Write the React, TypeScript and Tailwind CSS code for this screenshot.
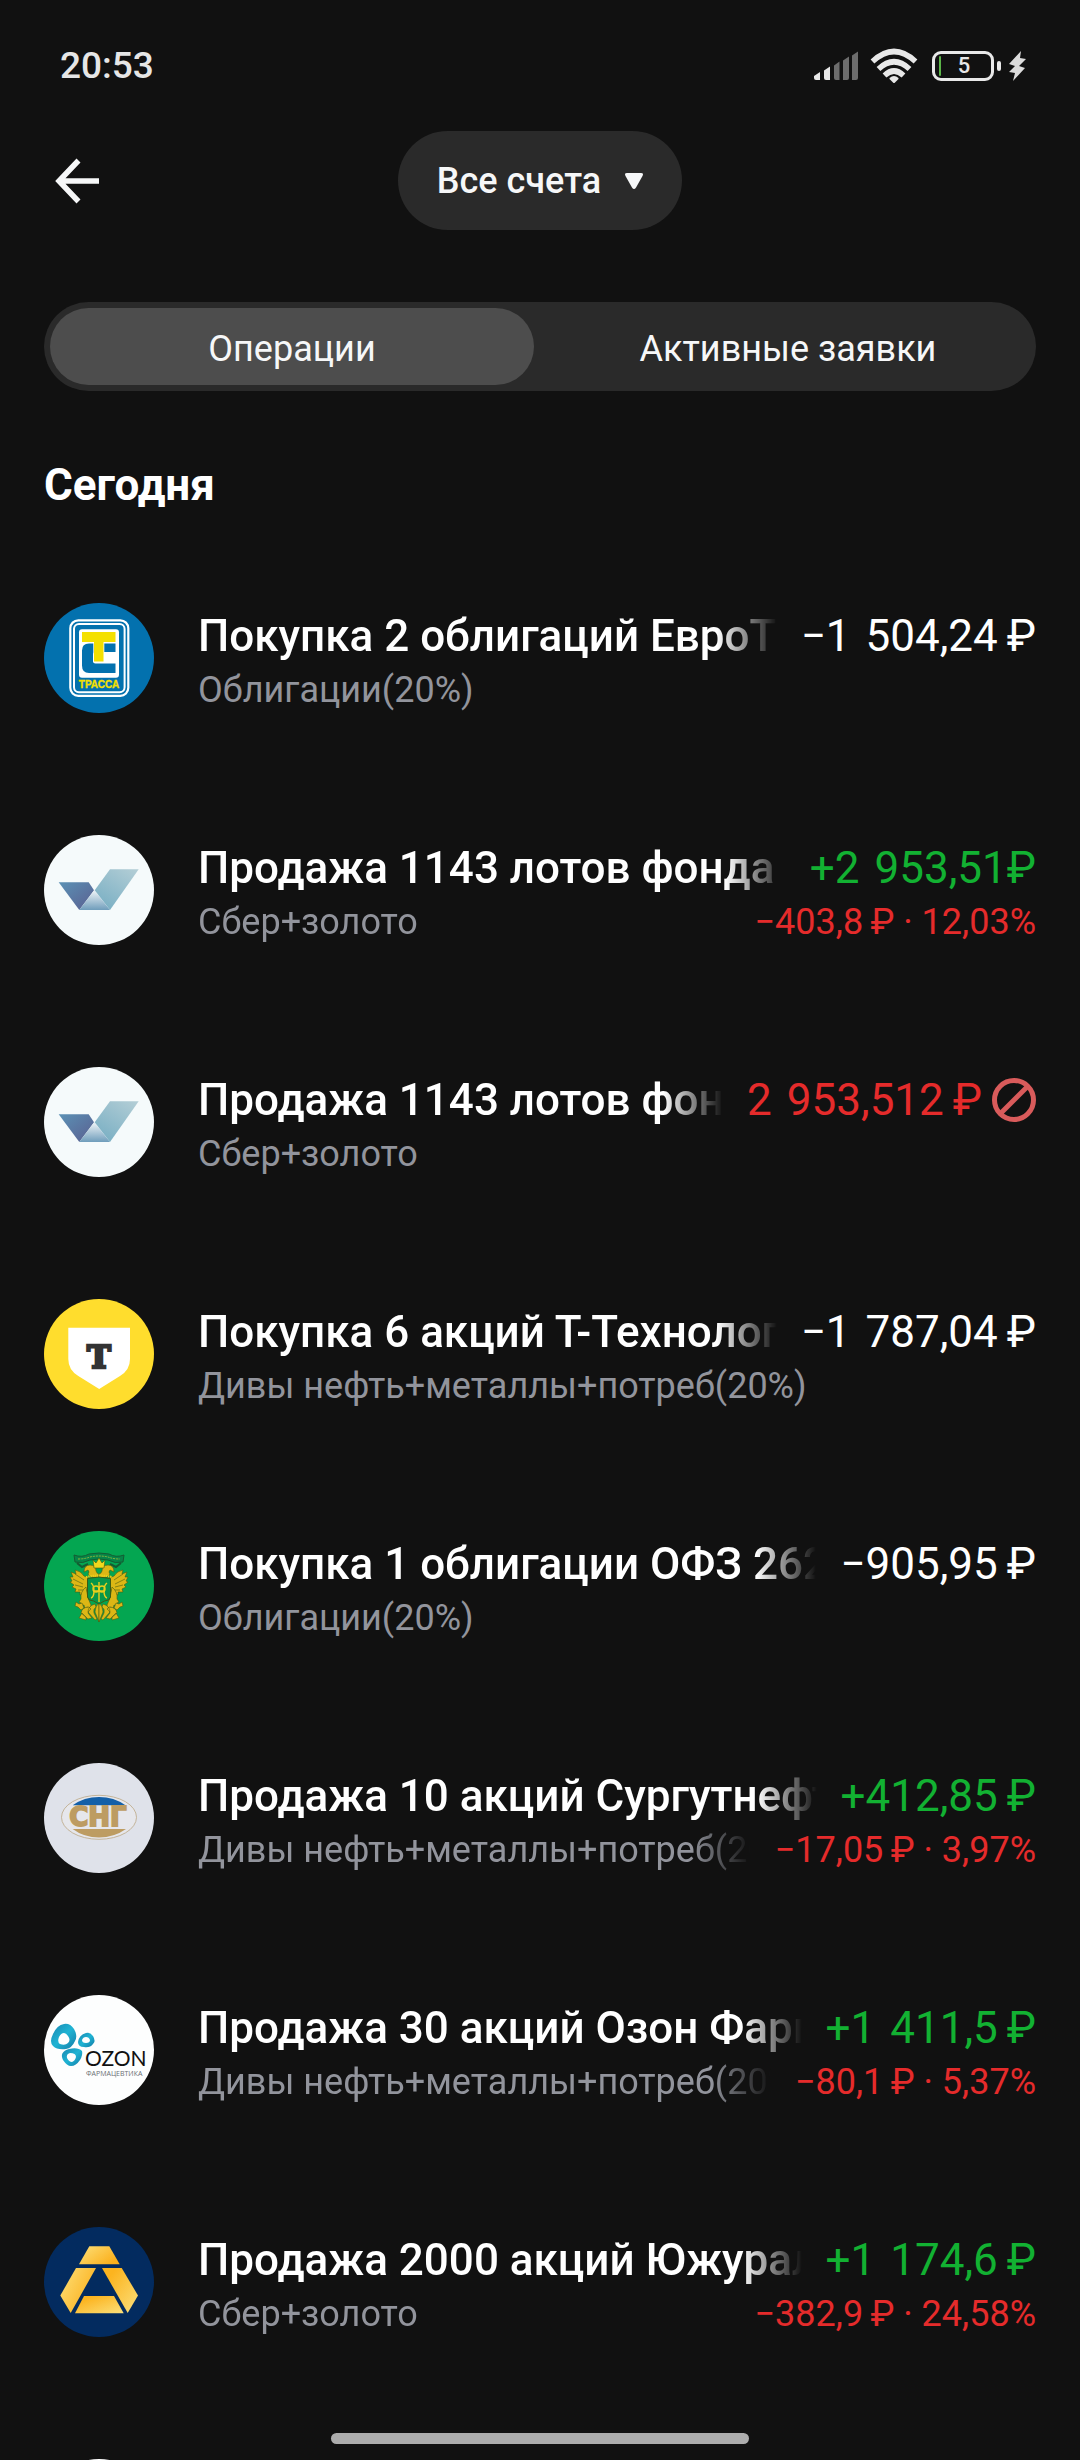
import type { ReactNode } from "react";

type Tone = "plain" | "gain" | "loss";

interface Operation {
  logo: ReactNode;
  title: string;
  account: string;
  amount: string;
  tone: Tone;
  result?: string;
  rejected?: boolean;
}

function Logo({ bg, label, children }: { bg: string; label: string; children?: ReactNode }) {
  return (
    <svg viewBox="0 0 110 110" role="img" aria-label={label} className="size-[110px] shrink-0">
      <circle cx="55" cy="55" r="55" fill={bg} />
      {children}
    </svg>
  );
}

function TrassaLogo() {
  return (
    <Logo bg="#0371ae" label="Трасса">
      <rect x="26.3" y="17.3" width="58" height="75.5" rx="8" fill="none" stroke="#fff" strokeWidth="2.2" />
      <rect x="30" y="21" width="50.6" height="68.2" rx="5" fill="none" stroke="#fff" strokeWidth="2" />
      <rect x="35" y="26.3" width="40" height="48.5" rx="3" fill="#fff" />
      <path d="M71.5 40.500H45q-7 0-7 7v15q0 7.500 7 7.500h26.500V60.500H51.500q-2.500 0-2.500-2.500v-6q0-3 2.500-3h20z" fill="#0371ae" />
      <path d="M49.300 39h11v20h-11z" fill="#fff" />
      <rect x="38" y="29" width="33.500" height="10" fill="#f4e000" />
      <rect x="50" y="29" width="9.500" height="29.500" fill="#f4e000" />
      <text x="55" y="85" textAnchor="middle" fontFamily="Liberation Sans, sans-serif" fontWeight="700" fontSize="10" fill="#f4e000" stroke="#f4e000" strokeWidth="0.300">
        ТРАССА
      </text>
    </Logo>
  );
}

function FundLogo({ id }: { id: string }) {
  return (
    <Logo bg="#f5fafb" label="Фонд">
      <defs>
        <linearGradient id={id + "a"} x1="0" y1="0" x2="1" y2="1">
          <stop offset="0" stopColor="#5b91b5" />
          <stop offset="1" stopColor="#5a5f90" />
        </linearGradient>
        <linearGradient id={id + "b"} x1="0" y1="0" x2="0" y2="1">
          <stop offset="0.1" stopColor="#e3ecf2" />
          <stop offset="1" stopColor="#6f9dbb" />
        </linearGradient>
        <linearGradient id={id + "c"} x1="1" y1="0" x2="0.3" y2="1">
          <stop offset="0" stopColor="#b4ced6" />
          <stop offset="1" stopColor="#7bb0c4" />
        </linearGradient>
      </defs>
      <path d="M14.700 47.300H44.700L50 55.300 35.300 75z" fill={"url(#" + id + "a)"} />
      <path d="M50.300 55.300 35.300 75H66z" fill={"url(#" + id + "b)"} />
      <path d="M66 34.300H94.700L66 75 50.700 55.300z" fill={"url(#" + id + "c)"} />
    </Logo>
  );
}

function TechLogo() {
  return (
    <Logo bg="#ffdd2d" label="Т-Технологии">
      <path d="M24.300 28.700H86V60q0 11-10 17L55.200 90 34.300 77q-10-6-10-17z" fill="#fff" />
      <text x="55" y="69" textAnchor="middle" fontFamily="DejaVu Serif, serif" fontWeight="700" fontSize="32" fill="#333" stroke="#333" strokeWidth="2.500">
        Т
      </text>
    </Logo>
  );
}

function EagleHalf() {
  return (
    <g stroke="#4a5c12" strokeWidth="0.6" fill="#dcb715" strokeLinejoin="round">
      <path d="M45 47 40 45Q37 40 31 39L32 43 27 41 29 46 26 46 28 50 26 51 30 54 28 56 32 58 31 61 36 61 36 64 41 62 44 57z" />
      <path d="M31 43l9 6M29 48l10 5M31 54l8 2M34 59l6 0" fill="none" />
      <path d="M54 47q-8 0-10-4 2-2 0-4l-4 2q0-7 6-7 6 0 6 6 1 3 3 3z" />
      <path d="M42 56q-6 5-5 12l-2 3 2 1-1 3 4-1 1 4 3-2 2 3 1-5-3-7z" />
      <path d="M38 72l-3 1-3-2-1 4 3 1 3 3 3-2z" />
      <path d="M55 72q-4 3-4 9l4 10z" />
      <path d="M51 73q-7 2-7 8l7 8 2-1-3-6q-1-4 2-6zM45 76q-7 0-8 6l7 6 4-1-4-5q0-2 3-4zM38 82l-3 5 7 2 0-3z" />
    </g>
  );
}

function TreasuryLogo() {
  return (
    <Logo bg="#04a651" label="ОФЗ">
      <path d="M30 24q8 3 15-1 10-2 20 0 7 4 15 1l-1 7q-8 2-15-2-9-2-18 0-7 4-15 2z" fill="#078447" stroke="#145c32" strokeWidth="1" />
      <path d="M34 28q7 0 12-2 9-2 18 0 5 2 12 2" stroke="#8fb93b" strokeWidth="1" strokeDasharray="2 1" fill="none" />
      <path d="M33 32l5 4 6-3M77 32l-5 4-6-3" stroke="#145c32" strokeWidth="2" fill="none" />
      <EagleHalf />
      <g transform="translate(110 0) scale(-1 1)">
        <EagleHalf />
      </g>
      <path d="M49 29l3 3 3-5 3 5 3-3-1 8H50z" fill="#f0d81d" stroke="#4a5c12" strokeWidth="0.6" />
      <path d="M43.500 47.500q11-3 23 0V66q-1 4-6 4l-5.500 3-5.500-3q-5 0-6-4z" fill="#07964a" stroke="#3d5a14" strokeWidth="1" />
      <path d="M42 46q13-3 26 0" stroke="#e9cf1d" strokeWidth="2" fill="none" strokeDasharray="1.500 0.700" />
      <g fill="none" stroke="#e9cf1d" strokeWidth="1.400">
        <path d="M47 52q3 2 3 8t-3 7M63 52q-3 2-3 8t3 7M55 51v20M49 60h12" />
        <circle cx="52" cy="58" r="3" />
        <circle cx="58" cy="58" r="3" />
      </g>
    </Logo>
  );
}

function SurgutLogo() {
  return (
    <Logo bg="#dfe2ea" label="Сургутнефтегаз">
      <ellipse cx="55" cy="54.300" rx="37.500" ry="22" fill="#e6e7ec" stroke="#bfae90" strokeWidth="0.900" />
      <path d="M28.700 42.300Q40 34 55 34t26.500 8.300z" fill="#1460a8" />
      <path d="M28.700 66Q40 74.500 55 74.500T82 66z" fill="#bd9c62" />
      <text x="54" y="63" textAnchor="middle" fontFamily="DejaVu Sans, sans-serif" fontWeight="700" fontSize="26" fill="#bd9c62" stroke="#bd9c62" strokeWidth="1.800">
        СНГ
      </text>
    </Logo>
  );
}

function OzonLogo() {
  return (
    <Logo bg="#fdfefe" label="Озон Фармацевтика">
      <defs>
        <linearGradient id="ozon-drop" x1="0" y1="0" x2="1" y2="1">
          <stop offset="0" stopColor="#1a86b0" />
          <stop offset="0.500" stopColor="#1fb4d4" />
          <stop offset="1" stopColor="#147ba6" />
        </linearGradient>
      </defs>
      <g fill="url(#ozon-drop)" fillRule="evenodd">
        <path d="M20 29q6-1 10 5 4 7 1 12-3 7-9 8-9 1-13-3-4-4 0-12 4-9 11-10zM20 38q-3 0-5 4-2 5 1 7 5 2 8-1 3-3 0-7-2-3-4-3z" />
        <path d="M42 38q4-1 7 3 3 5 0 8-3 4-9 3-6 0-6-5 1-7 8-9zM42 42q-3 0-4 3 0 3 4 3 4 0 4-3-1-3-4-3z" />
        <path d="M25 54q9-2 13 2 1 4-2 9-4 6-9 6-4 0-8-6-4-8 6-11zM26 58q-4 1-3 5 2 4 5 4 3-1 4-5 0-4-6-4z" />
      </g>
      <text x="41" y="71" fontFamily="Lato, sans-serif" fontSize="21" fill="#111">
        OZON
      </text>
      <text x="42" y="81" fontFamily="Open Sans, sans-serif" fontSize="7" fill="#6b7075">
        ФАРМАЦЕВТИКА
      </text>
    </Logo>
  );
}

function GoldLogo() {
  return (
    <Logo bg="#032b5f" label="Южуралзолото">
      <defs>
        <linearGradient id="gold-a" x1="0" y1="0" x2="1" y2="0.600">
          <stop offset="0" stopColor="#fde07a" />
          <stop offset="1" stopColor="#fbb01c" />
        </linearGradient>
        <linearGradient id="gold-b" x1="0" y1="0" x2="1" y2="1">
          <stop offset="0.200" stopColor="#fcb41f" />
          <stop offset="1" stopColor="#fbe07c" />
        </linearGradient>
      </defs>
      <path d="M45.300 19.300H65.300L75.700 37.300H35z" fill="url(#gold-a)" />
      <path d="M32 41H52L26.700 86 16.300 68.500z" fill="url(#gold-a)" />
      <path d="M58 41H77.700L94 68.500 83.700 86z" fill="url(#gold-b)" />
      <path d="M40 69H70L79.700 86.300H31z" fill="url(#gold-b)" />
    </Logo>
  );
}

// \u2004 separates thousands, \u2009 separates the number from the currency sign
const operations: Operation[] = [
  { logo: <TrassaLogo />, title: "Покупка 2 облигаций ЕвроТранс", account: "Облигации(20%)", amount: "−1\u2004504,24\u2009₽", tone: "plain" },
  { logo: <FundLogo id="fund1" />, title: "Продажа 1143 лотов фонда", account: "Сбер+золото", amount: "+2\u2004953,51₽", tone: "gain", result: "−403,8\u2009₽ · 12,03%" },
  { logo: <FundLogo id="fund2" />, title: "Продажа 1143 лотов фонда", account: "Сбер+золото", amount: "2\u2004953,512\u2009₽", tone: "loss", rejected: true },
  { logo: <TechLogo />, title: "Покупка 6 акций Т-Технологии", account: "Дивы нефть+металлы+потреб(20%)", amount: "−1\u2004787,04\u2009₽", tone: "plain" },
  { logo: <TreasuryLogo />, title: "Покупка 1 облигации ОФЗ 262", account: "Облигации(20%)", amount: "−905,95\u2009₽", tone: "plain" },
  { logo: <SurgutLogo />, title: "Продажа 10 акций Сургутнефтегаз", account: "Дивы нефть+металлы+потреб(20%)", amount: "+412,85\u2009₽", tone: "gain", result: "−17,05\u2009₽ · 3,97%" },
  { logo: <OzonLogo />, title: "Продажа 30 акций Озон Фармацевтика", account: "Дивы нефть+металлы+потреб(20%)", amount: "+1\u2004411,5\u2009₽", tone: "gain", result: "−80,1\u2009₽ · 5,37%" },
  { logo: <GoldLogo />, title: "Продажа 2000 акций Южуралзолото", account: "Сбер+золото", amount: "+1\u2004174,6\u2009₽", tone: "gain", result: "−382,9\u2009₽ · 24,58%" },
];

const toneClass: Record<Tone, string> = {
  plain: "text-white",
  gain: "text-[#12b132]",
  loss: "text-[#e52b2b]",
};

const fade = "[mask-image:linear-gradient(to_right,black_calc(100%_-_60px),transparent)]";

function OperationRow({ op }: { op: Operation }) {
  return (
    <li className="flex items-start gap-11">
      {op.logo}
      <div className="min-w-0 flex-1 pt-1.5">
        <div className="flex gap-6 text-[44px] leading-[54px] whitespace-nowrap">
          <h3 className={"min-w-0 flex-1 overflow-hidden font-medium text-white " + fade}>{op.title}</h3>
          <span className={"flex items-center gap-2.5 " + toneClass[op.tone]}>
            {op.amount}
            {op.rejected && (
              <svg viewBox="0 0 44 44" role="img" aria-label="Отклонено" className="size-11" fill="none" stroke="#d95b5b" strokeWidth="5">
                <circle cx="22" cy="22" r="19.500" />
                <path d="M8.500 35.500 35.500 8.500" />
              </svg>
            )}
          </span>
        </div>
        <div className="flex gap-6 text-[36px] leading-[54px] whitespace-nowrap">
          <p className={"min-w-0 flex-1 overflow-hidden text-[#92949c] " + (op.result ? fade : "")}>{op.account}</p>
          {op.result && <span className="text-[#e52b2b]">{op.result}</span>}
        </div>
      </div>
    </li>
  );
}

function StatusBar() {
  return (
    <div className="flex h-[131px] shrink-0 items-center justify-between pr-[54px] pl-[60px] text-[#e6e6e6]">
      <time className="text-[37px] leading-[44px] font-medium">20:53</time>
      <div className="flex items-center">
        <svg viewBox="0 0 44 30" className="mr-3 h-[30px] w-11" aria-label="Сигнал" role="img">
          <path d="M0 25l6-4v8H2q-2 0-2-2z" fill="#e8e8e8" />
          <path d="M10 19.500l6-4V29h-4q-2 0-2-2z" fill="#e8e8e8" />
          <path d="M20 14.500l5.500-4V29H22q-2 0-2-2zM29 9.500l6-4V27q0 2-2 2h-4zM38 4.500l6-4V27q0 2-2 2h-4z" fill="#6d6d6d" />
        </svg>
        <svg viewBox="0 0 48 36" className="mr-3.5 h-9 w-12" aria-label="Wi-Fi" role="img" fill="none" stroke="#e8e8e8" strokeWidth="5.500">
          <path d="M2.500 13.500q21.500-20 43 0" />
          <path d="M8.500 21q15.500-14.500 31 0" />
          <path d="M14.500 27.500q9.500-9 19 0" />
          <path d="M19.500 30q4.500-4 9 0v1L25 34.500q-1 1-2 0L19.500 31z" fill="#e8e8e8" stroke="none" />
        </svg>
        <div className="flex h-[30px] w-[62px] items-center rounded-[9px] border-3 border-[#e8e8e8] pl-1">
          <span className="h-5 w-[2px] rounded-full bg-[#5bb548]" />
          <span className="flex-1 pr-1 text-center text-[22px] leading-none font-medium">5</span>
        </div>
        <span className="ml-[3px] h-[10px] w-1 rounded-full bg-[#e8e8e8]" />
        <svg viewBox="0 0 18 30" className="ml-[7px] h-[30px] w-[18px]" aria-label="Зарядка" role="img">
          <path d="M13 0 1 13l6 2-6 6 6 1-2 8L17 17l-6-2 7-7-6-1z" fill="#dcdcdc" />
        </svg>
      </div>
    </div>
  );
}

export default function App() {
  return (
    <div className="relative flex h-screen flex-col overflow-hidden bg-[#111111] font-[Roboto,sans-serif] text-white">
      <StatusBar />
      <header className="grid shrink-0 grid-cols-[1fr_auto_1fr] items-center px-[55px]">
        <button type="button" aria-label="Назад" className="justify-self-start">
          <svg viewBox="0 0 44 46" className="h-[46px] w-11" fill="none" stroke="#f6f7f8" strokeWidth="5.500">
            <path d="M44 23H5M23.500 2.500 4 23l19.500 20.500" />
          </svg>
        </button>
        <button type="button" aria-haspopup="listbox" className="flex h-[99px] items-center gap-6 rounded-full bg-[#2a2a2a] px-[39px] text-[36px] leading-[44px] font-medium text-[#f6f7f8]">
          Все счета
          <svg viewBox="0 0 18 16" className="h-4 w-[18px]" aria-hidden="true">
            <path d="M2 0h14q3 0 1.500 3L11 14.500q-2 3-4 0L0.500 3Q-1 0 2 0z" fill="#f6f7f8" />
          </svg>
        </button>
      </header>
      <main className="px-11">
        <div role="tablist" className="mt-18 flex gap-3 rounded-full bg-[#2a2a2a] p-1.5 text-[36px] leading-[71px] text-[#f6f7f8]">
          <button type="button" role="tab" aria-selected="true" className="flex-1 rounded-full bg-[#4d4d4d] pt-1.5">
            Операции
          </button>
          <button type="button" role="tab" aria-selected="false" className="flex-1 rounded-full pt-1.5">
            Активные заявки
          </button>
        </div>
        <h2 className="mt-[67px] text-[44px] leading-[54px] font-bold">Сегодня</h2>
        <ul className="mt-[91px] flex flex-col gap-[118px]">
          {operations.map((op, i) => (
            <OperationRow key={i} op={op} />
          ))}
          <li>
            <Logo bg="#ffffff" label="Операция" />
          </li>
        </ul>
      </main>
      <div className="absolute bottom-4 left-1/2 h-[11px] w-[418px] -translate-x-1/2 rounded-full bg-[#adadad]" />
    </div>
  );
}
